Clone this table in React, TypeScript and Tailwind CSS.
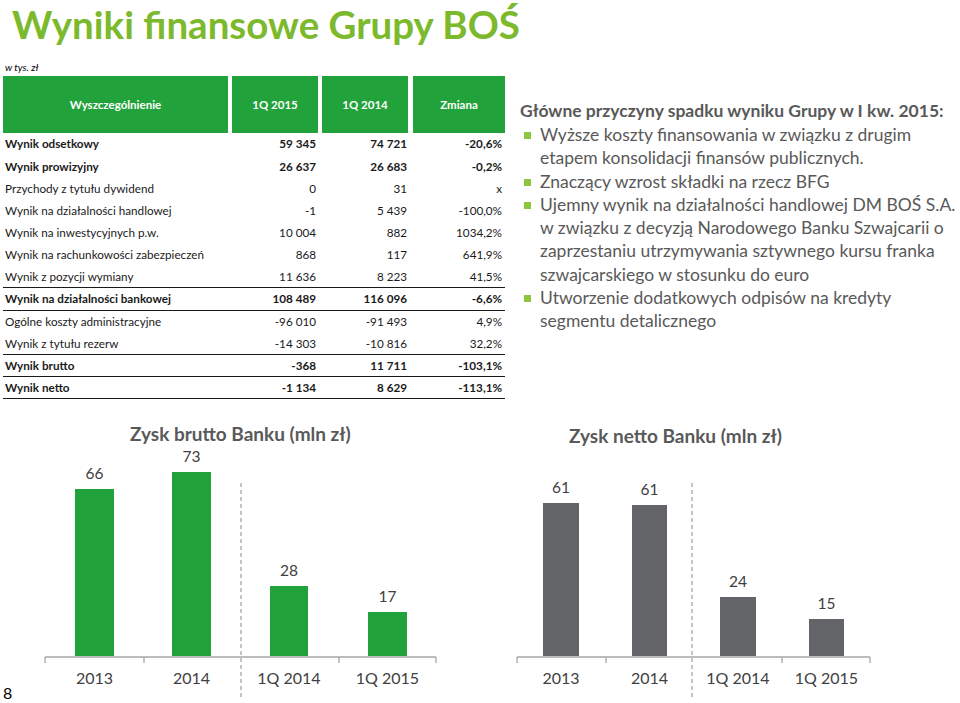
import React from "react";

type Row = {
  label: string;
  a: string;
  b: string;
  c: string;
  bold?: boolean;
  line?: boolean;
};

const rows: Row[] = [
  { label: "Wynik odsetkowy", a: "59 345", b: "74 721", c: "-20,6%", bold: true },
  { label: "Wynik prowizyjny", a: "26 637", b: "26 683", c: "-0,2%", bold: true },
  { label: "Przychody z tytułu dywidend", a: "0", b: "31", c: "x" },
  { label: "Wynik na działalności handlowej", a: "-1", b: "5 439", c: "-100,0%" },
  { label: "Wynik na inwestycyjnych p.w.", a: "10 004", b: "882", c: "1034,2%" },
  { label: "Wynik na rachunkowości zabezpieczeń", a: "868", b: "117", c: "641,9%" },
  { label: "Wynik z pozycji wymiany", a: "11 636", b: "8 223", c: "41,5%", line: true },
  { label: "Wynik na działalności bankowej", a: "108 489", b: "116 096", c: "-6,6%", bold: true, line: true },
  { label: "Ogólne koszty administracyjne", a: "-96 010", b: "-91 493", c: "4,9%" },
  { label: "Wynik z tytułu rezerw", a: "-14 303", b: "-10 816", c: "32,2%", line: true },
  { label: "Wynik brutto", a: "-368", b: "11 711", c: "-103,1%", bold: true, line: true },
  { label: "Wynik netto", a: "-1 134", b: "8 629", c: "-113,1%", bold: true, line: true },
];

const reasons = [
  ["Wyższe koszty finansowania w związku z drugim", "etapem konsolidacji finansów publicznych."],
  ["Znaczący wzrost składki na rzecz BFG"],
  [
    "Ujemny wynik na działalności handlowej DM BOŚ S.A.",
    "w związku z decyzją Narodowego Banku Szwajcarii o",
    "zaprzestaniu utrzymywania sztywnego kursu franka",
    "szwajcarskiego w stosunku do euro",
  ],
  ["Utworzenie dodatkowych odpisów na kredyty", "segmentu detalicznego"],
];

type Bar = { x: number; w: number; top: number; value: string; label: string };

interface ChartProps {
  bars: Bar[];
  color: string;
  axis: [number, number];
  ticks: number[];
  dash: number;
}

// everything drawn 4px lower so the tallest value label stays inside the svg
const Y = 4;

function BarChart({ bars, color, axis, ticks, dash }: ChartProps) {
  return (
    <svg width="480" height="257" className="block" style={{ fontFamily: "Lato, 'Open Sans', sans-serif" }}>
      <line x1={dash} y1={33 + Y} x2={dash} y2={247 + Y} stroke="#a6a6a6" strokeWidth="1.3" strokeDasharray="4 3" />
      {bars.map((b) => (
        <g key={b.label}>
          <rect x={b.x} y={b.top + Y} width={b.w} height={206 - b.top} fill={color} />
          <text x={b.x + b.w / 2} y={b.top - 10 + Y} textAnchor="middle" fontSize="15.5" fill="#404040">
            {b.value}
          </text>
          <text x={b.x + b.w / 2} y={234 + Y} textAnchor="middle" fontSize="16" fill="#404040">
            {b.label}
          </text>
        </g>
      ))}
      <line x1={axis[0]} y1={207 + Y} x2={axis[1]} y2={207 + Y} stroke="#a6a6a6" strokeWidth="1.5" />
      {ticks.map((t) => (
        <line key={t} x1={t} y1={207 + Y} x2={t} y2={213 + Y} stroke="#a6a6a6" strokeWidth="1.3" />
      ))}
    </svg>
  );
}

export default function App() {
  return (
    <div
      className="relative w-[960px] h-[703px] overflow-hidden bg-white text-[#262626]"
      style={{ fontFamily: "Lato, 'Open Sans', sans-serif" }}
    >
      {/* title */}
      <h1 className="pl-[12px] pt-[1px] h-[58px] text-[38.5px] leading-[46px] font-bold text-[#7cb92c]">
        Wyniki finansowe Grupy BOŚ
      </h1>

      <div className="flex">
        {/* table */}
        <div className="w-[508px] pl-[3px]">
          <div className="h-[18px] pl-[2px] text-[10px] italic leading-[18px] text-black">w tys. zł</div>
          <div className="flex h-[57px] text-[11.5px] font-bold text-white">
            <div className="w-[225px] bg-[#22a23a] flex items-center justify-center">Wyszczególnienie</div>
            <div className="ml-[4px] w-[86px] bg-[#22a23a] flex items-center justify-center">1Q 2015</div>
            <div className="ml-[4px] w-[86px] bg-[#22a23a] flex items-center justify-center">1Q 2014</div>
            <div className="ml-[5px] w-[92px] bg-[#22a23a] flex items-center justify-center">Zmiana</div>
          </div>
          {rows.map((r) => (
            <div
              key={r.label}
              className={
                "flex w-[502px] h-[22.2px] items-center text-[11.7px] text-[#1a1a1a] " +
                (r.bold ? "font-bold " : "") +
                (r.line ? "border-b-[1.5px] border-[#1a1a1a]" : "")
              }
            >
              <div className="w-[225px] pl-[2px]">{r.label}</div>
              <div className="ml-[4px] w-[86px] pr-[2px] text-right">{r.a}</div>
              <div className="ml-[4px] w-[86px] pr-[1px] text-right">{r.b}</div>
              <div className="ml-[5px] w-[92px] pr-[3px] text-right">{r.c}</div>
            </div>
          ))}
        </div>

        {/* reasons */}
        <div className="pl-[12px] pt-[42px] text-[#595959]">
          <div className="text-[17.5px] leading-[22px] font-bold">
            Główne przyczyny spadku wyniku Grupy w I kw. 2015:
          </div>
          <ul className="mt-[1px]">
            {reasons.map((lines, i) => (
              <li key={i} className="flex">
                <span className="w-[20px] shrink-0 pt-[9px] pl-[4px]">
                  <span className="block w-[7px] h-[7px] bg-[#8cc63e]" />
                </span>
                <div className="text-[17.5px] leading-[23.3px] whitespace-nowrap">
                  {lines.map((l) => (
                    <div key={l}>{l}</div>
                  ))}
                </div>
              </li>
            ))}
          </ul>
        </div>
      </div>

      {/* charts */}
      <div className="flex mt-[23px]">
        <div className="w-[480px]">
          <div className="h-[24px] pl-[130px] text-[19px] leading-[24px] font-bold text-[#595959]">
            Zysk brutto Banku (mln zł)
          </div>
          <BarChart
            color="#22a23a"
            axis={[45, 436]}
            ticks={[45, 144, 339, 436]}
            dash={241}
            bars={[
              { x: 75, w: 39, top: 39, value: "66", label: "2013" },
              { x: 172, w: 39, top: 22, value: "73", label: "2014" },
              { x: 270, w: 38, top: 136, value: "28", label: "1Q 2014" },
              { x: 368, w: 39, top: 162, value: "17", label: "1Q 2015" },
            ]}
          />
        </div>
        <div className="w-[480px]">
          <div className="h-[24px] pl-[89px] pt-[2px] text-[19px] leading-[24px] font-bold text-[#595959]">
            Zysk netto Banku (mln zł)
          </div>
          <BarChart
            color="#636467"
            axis={[37, 390]}
            ticks={[37, 126, 302, 390]}
            dash={212}
            bars={[
              { x: 63, w: 36, top: 53, value: "61", label: "2013" },
              { x: 152, w: 35, top: 55, value: "61", label: "2014" },
              { x: 240, w: 36, top: 147, value: "24", label: "1Q 2014" },
              { x: 329, w: 35, top: 169, value: "15", label: "1Q 2015" },
            ]}
          />
        </div>
      </div>

      {/* page number */}
      <span className="absolute left-[3px] bottom-[-2px] text-[16px] text-black">8</span>
    </div>
  );
}
